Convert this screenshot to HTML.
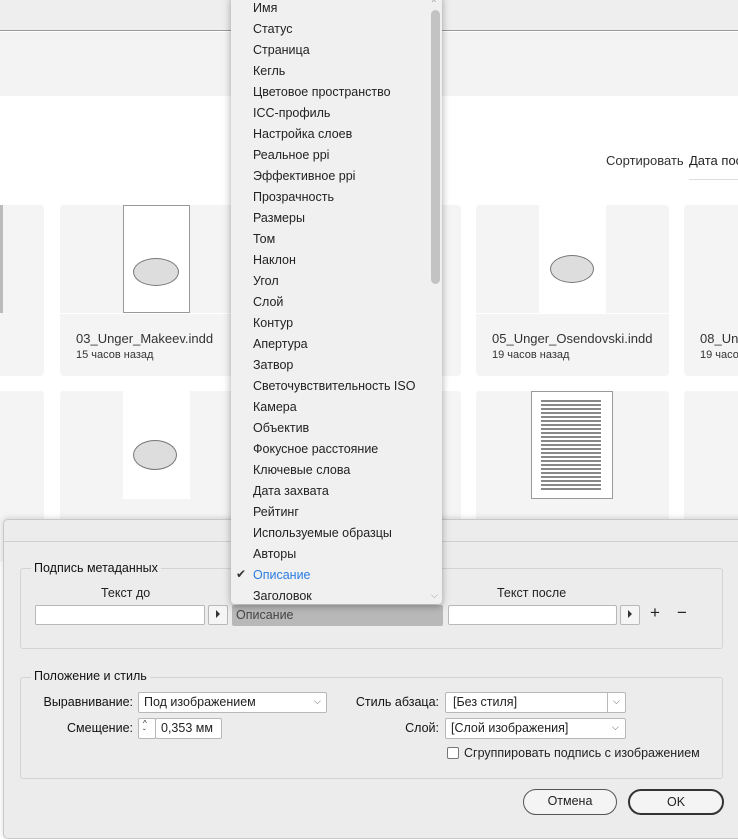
<!DOCTYPE html>
<html><head><meta charset="utf-8"><style>
*{box-sizing:border-box;margin:0;padding:0}
body{width:738px;height:831px;overflow:hidden;position:relative;background:#fff;font-family:"Liberation Sans",sans-serif;color:#222}
.a{position:absolute}
.card{position:absolute;background:#f4f4f4;border-radius:4px}
.thumb{position:absolute;background:#fff;border:1px solid #999}
.fn{position:absolute;font-size:13px;color:#333;white-space:nowrap}
.tm{position:absolute;font-size:11px;color:#333;white-space:nowrap}
.menu{position:absolute;left:231px;top:-4px;width:211px;height:608px;background:#f0f0f0;box-shadow:0 2px 8px rgba(0,0,0,.35);border-radius:0 0 4px 4px}
.mi{position:absolute;left:22px;font-size:12.5px;color:#222;white-space:nowrap;margin-top:1px}
.dlg{position:absolute;left:3px;top:519px;width:745px;height:320px;background:#ececec;border:1px solid #c8c8c8;border-radius:5px;box-shadow:0 -1px 6px rgba(0,0,0,.15)}
.grp{position:absolute;border:1px solid #d4d4d4;border-radius:3px}
.gl{position:absolute;font-size:12.5px;background:#ececec;padding:0 3px;color:#111}
.inp{position:absolute;background:#fff;border:1px solid #b8b8b8;border-radius:2px;font-size:12.5px;padding:2px 5px;color:#222;white-space:nowrap}
.lbl{position:absolute;font-size:12.5px;color:#111;text-align:right;white-space:nowrap}
.btn{position:absolute;border-radius:13px;font-size:12.5px;text-align:center;line-height:23px;background:#f4f4f4;color:#222}
.chev{position:absolute;font-size:9px;color:#555}
</style></head><body>
<div class="a" style="left:0;top:0;width:738px;height:31px;background:#eeeeee;border-bottom:1px solid #9a9a9a"></div>
<div class="a" style="left:0;top:32px;width:738px;height:64px;background:#f3f3f3"></div>
<div class="a" style="left:606px;top:153px;font-size:13px;color:#333">Сортировать</div>
<div class="a" style="left:689px;top:153px;font-size:13px;color:#222;white-space:nowrap">Дата пос</div>
<div class="a" style="left:689px;top:179px;width:60px;height:1px;background:#ddd"></div>

<div class="card" style="left:-149px;top:205px;width:193px;height:171px"></div>
<div class="a" style="left:0;top:205px;width:3px;height:108px;background:#bbb"></div>
<div class="card" style="left:60px;top:205px;width:193px;height:171px"></div>
<div class="a" style="left:60px;top:313px;width:193px;height:1px;background:#fff"></div>
<div class="thumb" style="left:123px;top:205px;width:67px;height:108px"></div>
<div class="a" style="left:133px;top:258px;width:46px;height:28px;border:1px solid #777;border-radius:50%;background:#ddd"></div>
<div class="fn" style="left:76px;top:331px">03_Unger_Makeev.indd</div>
<div class="tm" style="left:76px;top:349px">15 часов назад</div>
<div class="card" style="left:268px;top:205px;width:193px;height:171px"></div>
<div class="card" style="left:476px;top:205px;width:193px;height:171px"></div>
<div class="a" style="left:476px;top:313px;width:193px;height:1px;background:#fff"></div>
<div class="a" style="left:539px;top:205px;width:67px;height:108px;background:#fff"></div>
<div class="a" style="left:550px;top:255px;width:44px;height:28px;border:1px solid #777;border-radius:50%;background:#ddd"></div>
<div class="fn" style="left:492px;top:331px">05_Unger_Osendovski.indd</div>
<div class="tm" style="left:492px;top:349px">19 часов назад</div>
<div class="card" style="left:684px;top:205px;width:193px;height:171px"></div>
<div class="fn" style="left:700px;top:331px">08_Un</div>
<div class="tm" style="left:700px;top:349px">19 часов</div>

<div class="card" style="left:-149px;top:391px;width:193px;height:171px"></div>
<div class="card" style="left:60px;top:391px;width:193px;height:171px"></div>
<div class="a" style="left:123px;top:391px;width:67px;height:108px;background:#fff"></div>
<div class="a" style="left:133px;top:440px;width:44px;height:30px;border:1px solid #777;border-radius:50%;background:#ddd"></div>
<div class="card" style="left:268px;top:391px;width:193px;height:171px"></div>
<div class="card" style="left:476px;top:391px;width:193px;height:171px"></div>
<div class="thumb" style="left:531px;top:391px;width:82px;height:108px"></div>
<div class="a" style="left:541px;top:400px;width:60px;height:90px;background:repeating-linear-gradient(#888 0 2px,#fff 2px 4px)"></div>
<div class="card" style="left:684px;top:391px;width:193px;height:171px"></div>

<div class="dlg">
 <div class="a" style="left:0;top:21px;width:745px;height:1px;background:#d0d0d0"></div>
 <div class="grp" style="left:16px;top:48px;width:703px;height:81px"></div>
 <div class="gl" style="left:27px;top:41px">Подпись метаданных</div>
 <div class="a" style="left:97px;top:66px;font-size:12.5px">Текст до</div>
 <div class="a" style="left:493px;top:66px;font-size:12.5px">Текст после</div>
 <div class="inp" style="left:31px;top:85px;width:170px;height:20px"></div>
 <div class="inp" style="left:204px;top:85px;width:20px;height:20px;background:#f5f5f5"></div>
 <div class="a" style="left:212px;top:90px;width:0;height:0;border-left:4px solid #333;border-top:4px solid transparent;border-bottom:4px solid transparent"></div>
 <div class="a" style="left:228px;top:85px;width:211px;height:21px;background:#b8b8b8;border-radius:2px;font-size:12.5px;color:#444;padding:3px 4px">Описание</div>
 <div class="inp" style="left:444px;top:85px;width:169px;height:20px"></div>
 <div class="inp" style="left:616px;top:85px;width:20px;height:20px;background:#f5f5f5"></div>
 <div class="a" style="left:624px;top:90px;width:0;height:0;border-left:4px solid #333;border-top:4px solid transparent;border-bottom:4px solid transparent"></div>
 <div class="a" style="left:646px;top:83px;font-size:17px;color:#222">+</div>
 <div class="a" style="left:673px;top:83px;font-size:17px;color:#222">−</div>

 <div class="grp" style="left:16px;top:157px;width:703px;height:102px"></div>
 <div class="gl" style="left:27px;top:149px">Положение и стиль</div>
 <div class="lbl" style="right:614px;top:175px">Выравнивание:</div>
 <div class="inp" style="left:134px;top:172px;width:189px;height:21px">Под изображением</div>
 <div class="chev" style="left:310px;top:176px">⌵</div>
 <div class="lbl" style="right:614px;top:201px">Смещение:</div>
 <div class="inp" style="left:134px;top:198px;width:18px;height:21px;font-size:8px;padding:0 4px;line-height:9px">^<br>ˇ</div>
 <div class="inp" style="left:151px;top:198px;width:67px;height:21px">0,353 мм</div>
 <div class="lbl" style="right:308px;top:175px">Стиль абзаца:</div>
 <div class="inp" style="left:441px;top:172px;width:181px;height:21px;padding-left:7px">[Без стиля]</div>
 <div class="a" style="left:603px;top:173px;width:1px;height:19px;background:#b8b8b8"></div>
 <div class="chev" style="left:609px;top:176px">⌵</div>
 <div class="lbl" style="right:308px;top:201px">Слой:</div>
 <div class="inp" style="left:441px;top:198px;width:181px;height:21px">[Слой изображения]</div>
 <div class="chev" style="left:608px;top:202px">⌵</div>
 <div class="a" style="left:443px;top:227px;width:12px;height:12px;border:1px solid #777;border-radius:2px;background:#fff"></div>
 <div class="a" style="left:460px;top:226px;font-size:12.5px;white-space:nowrap">Сгруппировать подпись с изображением</div>

 <div class="btn" style="left:519px;top:269px;width:94px;height:26px;border:1px solid #555">Отмена</div>
 <div class="btn" style="left:624px;top:269px;width:96px;height:26px;border:2px solid #333;line-height:22px">OK</div>
</div>

<div class="menu">
 <div class="a" style="left:200px;top:14px;width:9px;height:274px;background:#c3c3c3;border-radius:5px"></div>
 <div class="a" style="left:201px;top:2px;font-size:8px;color:#888">^</div>
 <div class="a" style="left:200px;top:594px;font-size:9px;color:#999">⌵</div>
 <div class="mi" style="top:4px">Имя</div>
 <div class="mi" style="top:25px">Статус</div>
 <div class="mi" style="top:46px">Страница</div>
 <div class="mi" style="top:67px">Кегль</div>
 <div class="mi" style="top:88px">Цветовое пространство</div>
 <div class="mi" style="top:109px">ICC-профиль</div>
 <div class="mi" style="top:130px">Настройка слоев</div>
 <div class="mi" style="top:151px">Реальное ppi</div>
 <div class="mi" style="top:172px">Эффективное ppi</div>
 <div class="mi" style="top:193px">Прозрачность</div>
 <div class="mi" style="top:214px">Размеры</div>
 <div class="mi" style="top:235px">Том</div>
 <div class="mi" style="top:256px">Наклон</div>
 <div class="mi" style="top:277px">Угол</div>
 <div class="mi" style="top:298px">Слой</div>
 <div class="mi" style="top:319px">Контур</div>
 <div class="mi" style="top:340px">Апертура</div>
 <div class="mi" style="top:361px">Затвор</div>
 <div class="mi" style="top:382px">Светочувствительность ISO</div>
 <div class="mi" style="top:403px">Камера</div>
 <div class="mi" style="top:424px">Объектив</div>
 <div class="mi" style="top:445px">Фокусное расстояние</div>
 <div class="mi" style="top:466px">Ключевые слова</div>
 <div class="mi" style="top:487px">Дата захвата</div>
 <div class="mi" style="top:508px">Рейтинг</div>
 <div class="mi" style="top:529px">Используемые образцы</div>
 <div class="mi" style="top:550px">Авторы</div>
 <div class="mi" style="top:571px;color:#2a7de1">Описание</div>
 <div class="a" style="left:5px;top:571px;font-size:12px;color:#333">✔</div>
 <div class="mi" style="top:592px">Заголовок</div>
</div>
</body></html>
